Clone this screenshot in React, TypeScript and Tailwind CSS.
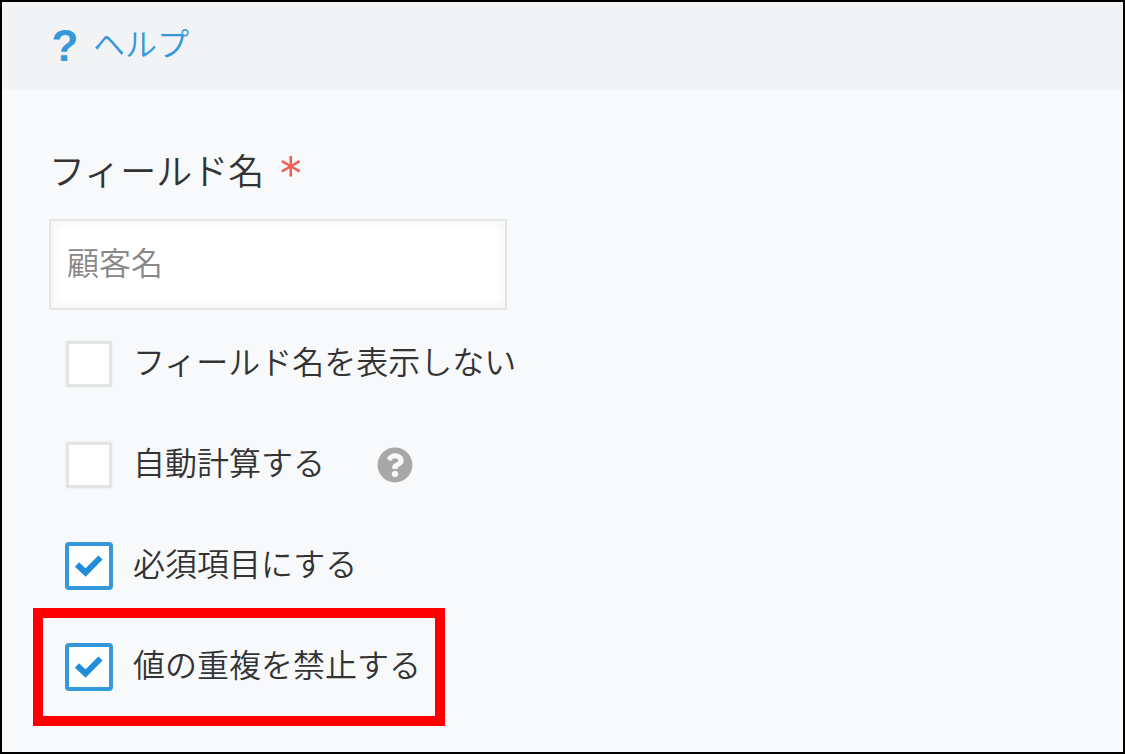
import React, { useState } from 'react';
import { FaQuestionCircle } from 'react-icons/fa';

/**
 * FieldSettings — field settings panel
 *
 * Help bar, field name and the list of options.
 */

// Options of the field
const options = [
    { id: 'hide-name', label: 'フィールド名を表示しない', checked: false, hint: false, marked: false },
    { id: 'auto-calc', label: '自動計算する', checked: false, hint: true, marked: false },
    { id: 'required', label: '必須項目にする', checked: true, hint: false, marked: false },
    { id: 'unique', label: '値の重複を禁止する', checked: true, hint: false, marked: true }
];

type Option = (typeof options)[number];

const OptionRow: React.FC<{ option: Option }> = ({ option }) => {
    const [checked, setChecked] = useState(option.checked);

    return (
        <li className="relative flex w-fit items-center pl-4">
            {/* Highlight frame */}
            {option.marked && (
                <span className="pointer-events-none absolute -inset-x-4 -inset-y-[35px] -right-6 border-[10px] border-[#ff0000]" />
            )}

            <span className="grid size-12 shrink-0 place-items-center">
                <input
                    id={option.id}
                    type="checkbox"
                    checked={checked}
                    onChange={(e) => setChecked(e.target.checked)}
                    className="peer col-start-1 row-start-1 size-[46px] appearance-none rounded-xs border-3 border-[#e3e5e5] bg-white shadow-[0_0_2px_#e3e5e5] checked:size-12 checked:rounded-sm checked:border-4 checked:border-[#3498db] checked:shadow-none"
                />
                <svg
                    viewBox="0 0 48 48"
                    className="pointer-events-none invisible col-start-1 row-start-1 size-12 peer-checked:visible"
                    fill="none"
                    stroke="#1f8dd8"
                    strokeWidth="6"
                >
                    <path d="M12 22.5 20.5 30.5 35.5 15.5" />
                </svg>
            </span>

            <label htmlFor={option.id} className="pb-2 pl-5 text-[32px] leading-10">
                {option.label}
            </label>

            {option.hint && (
                <button type="button" aria-label="自動計算する" className="ml-[52px] text-[#a8a8a8]">
                    <FaQuestionCircle size={36} />
                </button>
            )}
        </li>
    );
};

export default function App() {
    const [name, setName] = useState('顧客名');

    return (
        <div className="min-h-screen border-2 border-black bg-[#f7f9fb] font-['Noto_Sans_CJK_JP',sans-serif] font-[350] text-[#333333]">

            {/* Help */}
            <header className="flex h-22 items-center bg-[#f1f3f5] px-[47px]">
                <a href="#help" className="flex items-center gap-3 text-[32px] leading-11 text-[#3498db]">
                    <span className="w-8 text-center font-['Liberation_Sans',sans-serif] text-[44px] font-bold">?</span>
                    <span className="pb-2">ヘルプ</span>
                </a>
            </header>

            <main className="px-[47px] pt-[53px] pb-15">
                {/* Field name */}
                <label htmlFor="field-name" className="flex items-center gap-3.5 text-[36px] leading-[52px]">
                    フィールド名
                    <span className="pt-3 font-['Inter',sans-serif] text-[50px] leading-10 font-light text-[#f25c54]">*</span>
                </label>
                <input
                    id="field-name"
                    type="text"
                    value={name}
                    onChange={(e) => setName(e.target.value)}
                    className="mt-6 block h-[91px] w-full max-w-[458px] border-2 border-[#e3e7e8] bg-white px-4 pb-2 text-[32px] text-[#888888] shadow-[inset_0_0_12px_#f0f0f0]"
                />

                {/* Options */}
                <ul className="mt-[30px] flex flex-col gap-[53px]">
                    {options.map((option) => (
                        <OptionRow key={option.id} option={option} />
                    ))}
                </ul>
            </main>
        </div>
    );
}
